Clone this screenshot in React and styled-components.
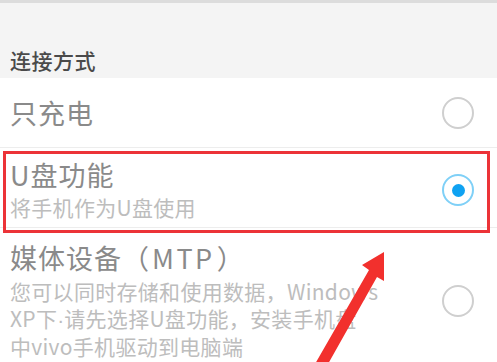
import React from "react";
import styled, { createGlobalStyle } from "styled-components";

const Global = createGlobalStyle`
  html, body { margin: 0; padding: 0; background: #ffffff; }
  body { font-family: "Noto Sans CJK SC", "Noto Sans", sans-serif; }
`;

const Page = styled.div`
  position: relative;
  width: 497px;
  height: 362px;
  overflow: hidden;
  background: #ffffff;
`;

const TopLine = styled.div`
  height: 3px;
  background: #dcdcdc;
`;

const SectionHeader = styled.div`
  height: 75px;
  box-sizing: border-box;
  background: #f4f4f4;
  display: flex;
  align-items: flex-end;
  padding: 0 0 6px 10px;
  font-size: 21px;
  line-height: 24px;
  font-weight: 500;
  color: #4a4a4a;
  letter-spacing: 0.5px;
`;

const Row = styled.div`
  display: flex;
  align-items: center;
  justify-content: space-between;
  box-sizing: border-box;
  min-height: ${(p) => p.$h}px;
  padding: ${(p) => p.$pt}px 23px ${(p) => p.$pb}px 10px;
  border-bottom: 1px solid #ededed;
`;

const TextBlock = styled.div`
  display: flex;
  flex-direction: column;
`;

const Title = styled.div`
  font-size: 27px;
  line-height: 32px;
  color: #8a8a8a;
  letter-spacing: 1px;
`;

const Latin = styled.span`
  letter-spacing: 2.5px;
  margin: 0 2px;
`;

const Desc = styled.div`
  margin-top: ${(p) => p.$mt}px;
  font-size: 21px;
  line-height: 26.5px;
  color: #bdbdbd;
  letter-spacing: 0.3px;
`;

const Line = styled.span`
  display: block;
  white-space: nowrap;
`;

const Dot = styled.span`
  font-family: "Liberation Sans", sans-serif;
  letter-spacing: 0;
`;

const Radio = styled.div`
  flex: none;
  width: 32px;
  height: 32px;
  box-sizing: border-box;
  border-radius: 50%;
  border: 2px solid ${(p) => (p.$on ? "#7fd0f7" : "#cfcfcf")};
  display: flex;
  align-items: center;
  justify-content: center;
  &::after {
    content: "";
    display: ${(p) => (p.$on ? "block" : "none")};
    width: 13px;
    height: 13px;
    border-radius: 50%;
    background: #0fa2f2;
  }
`;

const Highlight = styled.div`
  position: absolute;
  left: 3px;
  top: 151px;
  width: 487px;
  height: 82px;
  box-sizing: border-box;
  border: 3px solid #ec3338;
  pointer-events: none;
`;

const Overlay = styled.svg`
  position: absolute;
  left: 0;
  top: 0;
  pointer-events: none;
`;

export default function App() {
  return (
    <Page>
      <Global />
      <TopLine />
      <SectionHeader>连接方式</SectionHeader>
      <Row $h={70} $pt={0} $pb={0}>
        <Title>只充电</Title>
        <Radio />
      </Row>
      <Row $h={80} $pt={11} $pb={6}>
        <TextBlock>
          <Title>U盘功能</Title>
          <Desc $mt={3}>将手机作为U盘使用</Desc>
        </TextBlock>
        <Radio $on />
      </Row>
      <Row $h={130} $pt={14} $pb={2}>
        <TextBlock>
          <Title>
            媒体设备（<Latin>MTP</Latin>）
          </Title>
          <Desc $mt={4}>
            <Line>您可以同时存储和使用数据，Windows</Line>
            <Line>
              XP下<Dot>·</Dot>请先选择U盘功能，安装手机盘
            </Line>
            <Line>中vivo手机驱动到电脑端</Line>
          </Desc>
        </TextBlock>
        <Radio />
      </Row>
      <Highlight />
      <Overlay width="497" height="362" viewBox="0 0 497 362">
        <polygon
          points="384,252 384,281 377,277 328,364 315,364 369,270 362,265"
          fill="#f2302d"
        />
      </Overlay>
    </Page>
  );
}
